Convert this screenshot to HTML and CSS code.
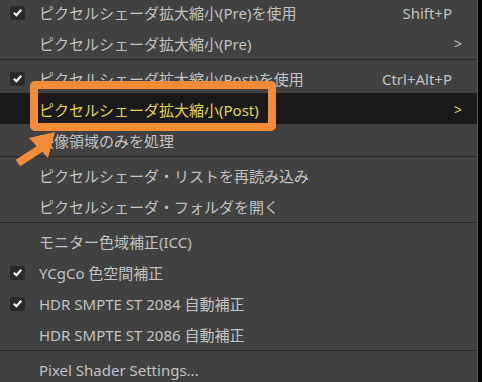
FILE: index.html
```html
<!DOCTYPE html>
<html lang="ja">
<head>
  <meta charset="UTF-8">
  <title>ピクセルシェーダ メニュー</title>
  <link rel="stylesheet" href="styles.css">
</head>
<body>

<div class="menu">
  <div class="item">
    <span class="check on"><svg viewBox="0 0 10 10"><path d="M1.6 5.2 L4 7.4 L8.4 2.6"/></svg></span>
    <span class="label">ピクセルシェーダ拡大縮小(Pre)を使用</span>
    <span class="key">Shift+P</span>
  </div>
  <div class="item">
    <span class="check"></span>
    <span class="label">ピクセルシェーダ拡大縮小(Pre)</span>
    <span class="sub">&gt;</span>
  </div>
  <div class="sep"></div>
  <div class="item">
    <span class="check on"><svg viewBox="0 0 10 10"><path d="M1.6 5.2 L4 7.4 L8.4 2.6"/></svg></span>
    <span class="label">ピクセルシェーダ拡大縮小(Post)を使用</span>
    <span class="key">Ctrl+Alt+P</span>
  </div>
  <div class="item active">
    <span class="check"></span>
    <span class="label">ピクセルシェーダ拡大縮小(Post)</span>
    <span class="sub">&gt;</span>
  </div>
  <div class="item">
    <span class="check"></span>
    <span class="label">映像領域のみを処理</span>
  </div>
  <div class="sep"></div>
  <div class="item">
    <span class="check"></span>
    <span class="label">ピクセルシェーダ・リストを再読み込み</span>
  </div>
  <div class="item">
    <span class="check"></span>
    <span class="label">ピクセルシェーダ・フォルダを開く</span>
  </div>
  <div class="sep"></div>
  <div class="item">
    <span class="check"></span>
    <span class="label">モニター色域補正(ICC)</span>
  </div>
  <div class="item">
    <span class="check on"><svg viewBox="0 0 10 10"><path d="M1.6 5.2 L4 7.4 L8.4 2.6"/></svg></span>
    <span class="label">YCgCo 色空間補正</span>
  </div>
  <div class="item">
    <span class="check on"><svg viewBox="0 0 10 10"><path d="M1.6 5.2 L4 7.4 L8.4 2.6"/></svg></span>
    <span class="label">HDR SMPTE ST 2084 自動補正</span>
  </div>
  <div class="item">
    <span class="check"></span>
    <span class="label">HDR SMPTE ST 2086 自動補正</span>
  </div>
  <div class="sep"></div>
  <div class="item">
    <span class="check"></span>
    <span class="label">Pixel Shader Settings...</span>
  </div>

  <!-- annotation drawn over the menu -->
  <div class="mark"></div>
  <svg class="arrow" viewBox="0 0 48 42">
    <line x1="31" y1="21" x2="8" y2="36"/>
    <polygon points="45,5 19,11 38,31"/>
  </svg>
</div>

</body>
</html>
```

FILE: styles.css
```css
body {
  margin: 0;
  background: #050505;
  font-family: "Noto Sans", "Noto Sans CJK JP", sans-serif;
  font-size: 15px;
  overflow: hidden;
}
.menu {
  position: relative;
  width: 477px;
  margin-top: -4px;
  background: #414141;
  border-right: 1px solid #5a5a5a;
  height: 390px;
}
.item {
  display: flex;
  align-items: center;
  height: 31px;
  color: #c2c2c2;
  padding-right: 15px;
}
.item .label {
  flex: 1;
  padding-top: 2px;
  white-space: nowrap;
}
.check {
  width: 15px;
  height: 14px;
  margin: 2px 14px 0 10px;
  border-radius: 2px;
  display: flex;
  align-items: center;
  justify-content: center;
}
.check.on {
  background: #2a2a2a;
}
.check svg {
  width: 11px;
  height: 11px;
  fill: none;
  stroke: #f2f2f2;
  stroke-width: 2;
}
.key {
  padding-top: 2px;
  margin-right: 10px;
}
.sub {
  padding-top: 2px;
  margin-right: 0;
  font-size: 14px;
}
.item.active {
  background: #1a1a1a;
  color: #e2d64c;
}
.sep {
  height: 1px;
  margin: 1px 0 2px;
  background: #2b2b2b;
}
.mark {
  position: absolute;
  left: 30px;
  top: 85px;
  width: 230px;
  height: 34px;
  border: 8px solid #f48b36;
  border-radius: 5px;
}
.arrow {
  position: absolute;
  left: 10px;
  top: 131px;
  width: 48px;
  height: 42px;
}
.arrow line {
  stroke: #f48b36;
  stroke-width: 8;
}
.arrow polygon {
  fill: #f48b36;
}
```
